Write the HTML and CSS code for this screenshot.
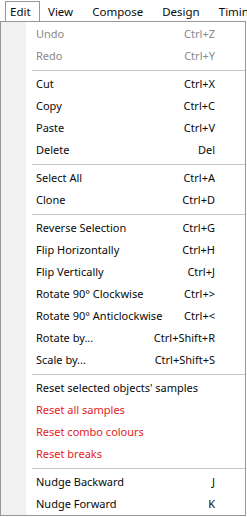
FILE: index.html
```html
<!DOCTYPE html>
<html lang="en">
<head>
    <meta charset="UTF-8">
    <meta name="viewport" content="width=device-width, initial-scale=1.0">
    <title>Edit menu</title>
    <link rel="stylesheet" href="styles.css">
</head>
<body>
    <div class="menubar">
        <span class="bar-item active">Edit</span>
        <span class="bar-item">View</span>
        <span class="bar-item">Compose</span>
        <span class="bar-item">Design</span>
        <span class="bar-item">Timing</span>
    </div>

    <ul class="menu">
        <li class="item disabled"><span class="label">Undo</span><span class="key">Ctrl+Z</span></li>
        <li class="item disabled"><span class="label">Redo</span><span class="key">Ctrl+Y</span></li>
        <li class="sep"></li>
        <li class="item"><span class="label">Cut</span><span class="key">Ctrl+X</span></li>
        <li class="item"><span class="label">Copy</span><span class="key">Ctrl+C</span></li>
        <li class="item"><span class="label">Paste</span><span class="key">Ctrl+V</span></li>
        <li class="item"><span class="label">Delete</span><span class="key">Del</span></li>
        <li class="sep"></li>
        <li class="item"><span class="label">Select All</span><span class="key">Ctrl+A</span></li>
        <li class="item"><span class="label">Clone</span><span class="key">Ctrl+D</span></li>
        <li class="sep"></li>
        <li class="item"><span class="label">Reverse Selection</span><span class="key">Ctrl+G</span></li>
        <li class="item"><span class="label">Flip Horizontally</span><span class="key">Ctrl+H</span></li>
        <li class="item"><span class="label">Flip Vertically</span><span class="key">Ctrl+J</span></li>
        <li class="item"><span class="label">Rotate 90° Clockwise</span><span class="key">Ctrl+&gt;</span></li>
        <li class="item"><span class="label">Rotate 90° Anticlockwise</span><span class="key">Ctrl+&lt;</span></li>
        <li class="item"><span class="label">Rotate by...</span><span class="key">Ctrl+Shift+R</span></li>
        <li class="item"><span class="label">Scale by...</span><span class="key">Ctrl+Shift+S</span></li>
        <li class="sep"></li>
        <li class="item"><span class="label">Reset selected objects' samples</span></li>
        <li class="item danger"><span class="label">Reset all samples</span></li>
        <li class="item danger"><span class="label">Reset combo colours</span></li>
        <li class="item danger"><span class="label">Reset breaks</span></li>
        <li class="sep"></li>
        <li class="item"><span class="label">Nudge Backward</span><span class="key">J</span></li>
        <li class="item"><span class="label">Nudge Forward</span><span class="key">K</span></li>
    </ul>
</body>
</html>
```

FILE: styles.css
```css
:root {
    --border: #979797;
    --gutter: #f1f1f1;
    --sep: #c5c5c5;
    --text: #0a0a0a;
    --muted: #8a8a8a;
    --danger: #e31b23;
}

* {
    margin: 0;
    padding: 0;
    box-sizing: border-box;
}

body {
    font-family: "Noto Sans", sans-serif;
    font-size: 11px;
    color: var(--text);
    background: #ffffff;
    overflow: hidden;
}

.menubar {
    display: flex;
    height: 21px;
    padding-left: 5px;
    font-size: 11.5px;
    white-space: nowrap;
    overflow: hidden;
}

.bar-item {
    flex-shrink: 0;
    height: 20px;
    margin-top: 1px;
    padding: 0 8.5px;
    line-height: 19px;
    border: 1px solid transparent;
    border-bottom: none;
}

.bar-item.active {
    width: 35px;
    padding: 0 0 0 4px;
    border-color: var(--border);
    background: #ffffff;
}

.bar-item.active + .bar-item {
    margin-left: -1.5px;
}

.menu {
    list-style: none;
    width: 246px;
    height: 495px;
    padding-top: 1px;
    border: 1px solid var(--border);
    background: linear-gradient(to right, var(--gutter) 25px, #ffffff 25px);
}

.item {
    display: flex;
    justify-content: space-between;
    height: 22px;
    line-height: 22px;
    padding: 0 30px 0 35px;
    white-space: nowrap;
}

.item.disabled {
    color: var(--muted);
}

.item.danger {
    color: var(--danger);
}

.sep {
    height: 6px;
    margin-left: 31px;
    padding-top: 3px;
}

.sep::before {
    content: "";
    display: block;
    height: 1px;
    background: var(--sep);
}
```
